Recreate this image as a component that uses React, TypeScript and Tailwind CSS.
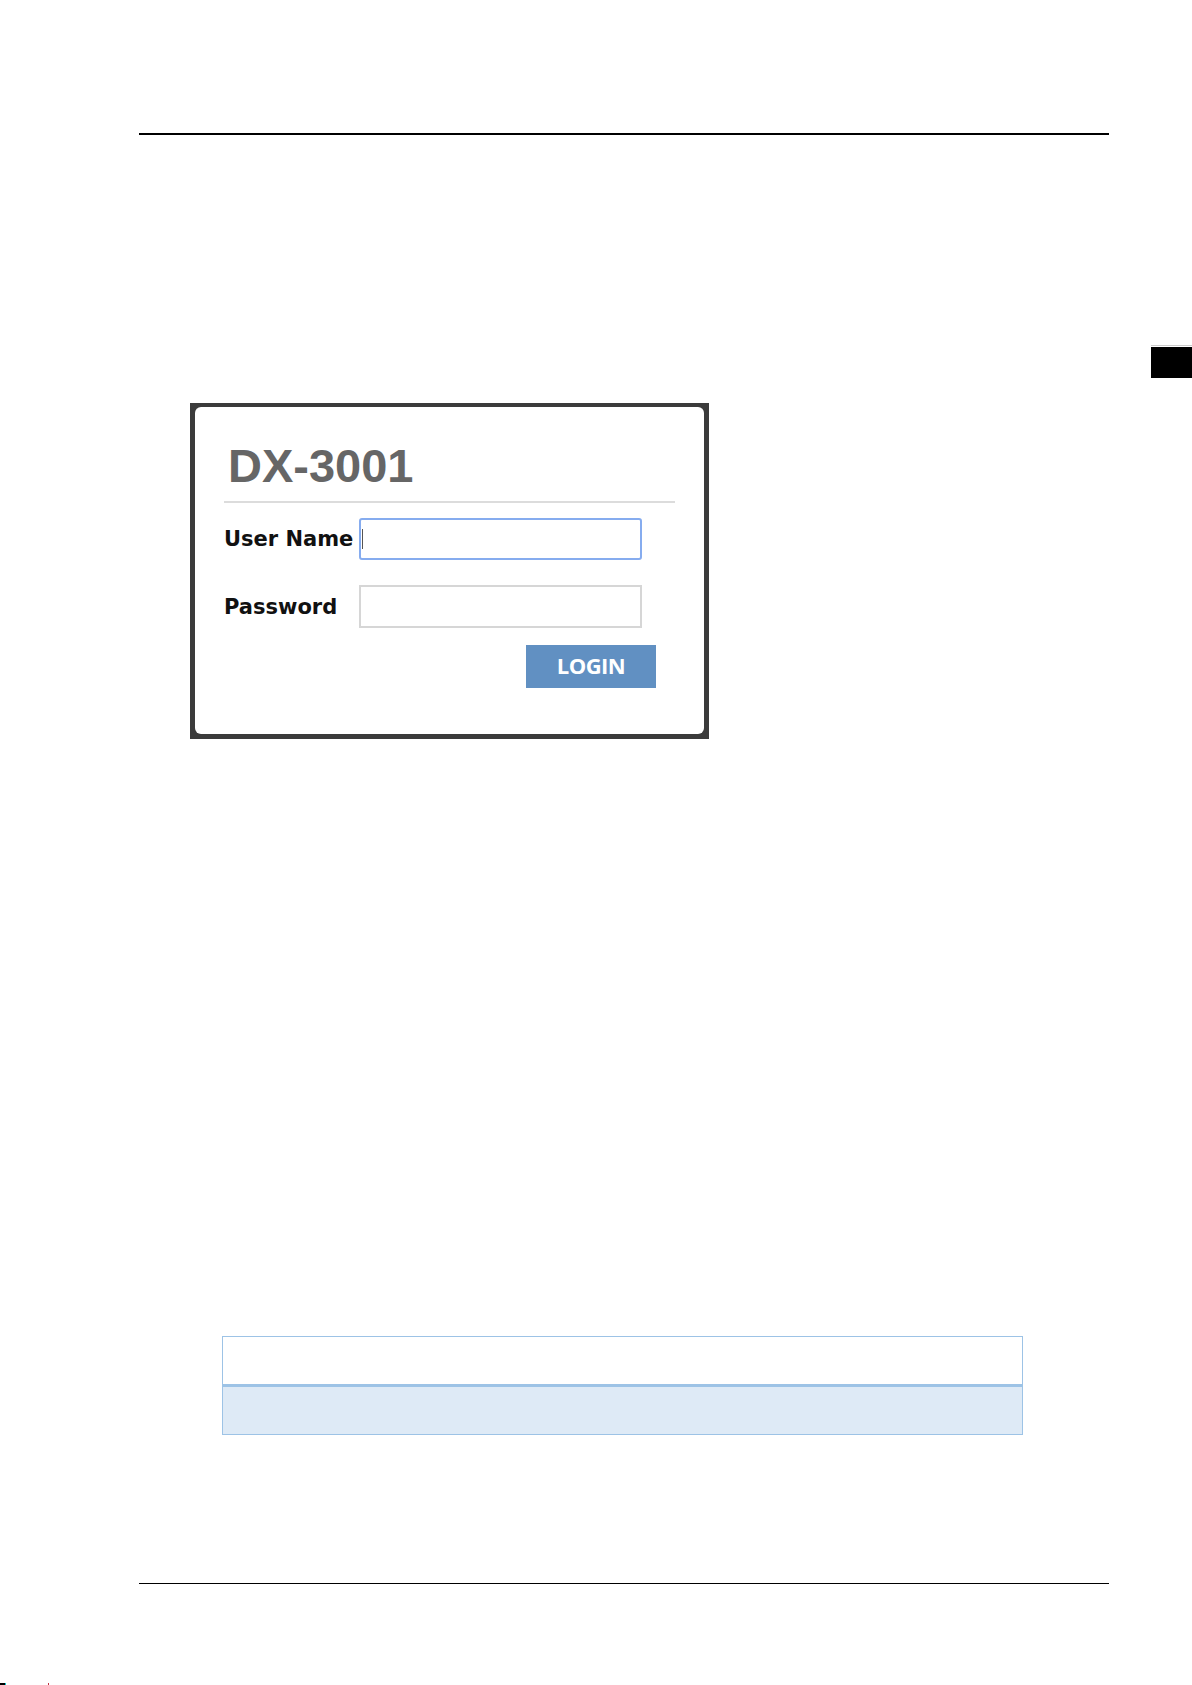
import React from "react";

export default function App() {
  return (
    <div className="w-[1192px] h-[1685px] bg-white flex flex-col overflow-hidden">
      {/* top rule */}
      <div className="mt-[133px] ml-[139px] w-[970px] h-[2px] bg-black" />

      {/* side tab */}
      <div className="mt-[210px] flex flex-col items-end">
        <div className="w-[41px] h-px bg-[#cccccc]" />
        <div className="mt-px w-[41px] h-[31px] bg-black" />
      </div>

      {/* login screenshot */}
      <div className="mt-[25px] ml-[190px] w-[519px] h-[336px] bg-[#3b3b3b] pt-[4px] pl-[5px] pr-[5px] pb-[5px]">
        <div className="w-full h-full bg-white rounded-[6px] flex flex-col px-[29px] pt-[35px]">
          <div
            className="pl-[4px] text-[47px] leading-[47px] font-bold text-[#666666]"
            style={{ fontFamily: '"Liberation Sans", Arial, sans-serif' }}
          >
            DX-3001
          </div>
          <div className="mt-[12px] h-[2px] bg-[#dcdcdc]" />

          <div
            className="mt-[15px] flex items-center"
            style={{ fontFamily: '"DejaVu Sans", Verdana, sans-serif' }}
          >
            <div className="w-[135px] shrink-0 text-[21px] leading-[24px] font-bold text-[#111111]">
              User Name
            </div>
            <div className="w-[283px] h-[42px] border-2 border-[#86acef] rounded-[3px] flex items-center pl-px">
              <div className="w-px h-[20px] bg-[#555555]" />
            </div>
          </div>

          <div
            className="mt-[25px] flex items-center"
            style={{ fontFamily: '"DejaVu Sans", Verdana, sans-serif' }}
          >
            <div className="w-[135px] shrink-0 text-[21px] leading-[24px] font-bold text-[#111111]">
              Password
            </div>
            <div className="w-[283px] h-[43px] border-2 border-[#d6d6d6]" />
          </div>

          <div className="mt-[17px] self-end mr-[19px] w-[130px] h-[43px] bg-[#6190c2] flex items-center justify-center pb-[4px]">
            <span
              className="text-white font-bold text-[22px] leading-none tracking-[-0.5px]"
              style={{ fontFamily: '"Open Sans", "Noto Sans", sans-serif' }}
            >
              LOGIN
            </span>
          </div>
        </div>
      </div>

      {/* table */}
      <div className="mt-[597px] ml-[222px] w-[801px] border border-[#9dc3e6] flex flex-col">
        <div className="h-[47px] bg-white" />
        <div className="h-[3px] bg-[#9dc3e6]" />
        <div className="h-[47px] bg-[#deeaf6]" />
      </div>

      {/* bottom rule */}
      <div className="mt-[148px] ml-[139px] w-[970px] h-px bg-black" />

      {/* tiny marks at page bottom */}
      <div className="mt-[99px] flex h-[2px]">
        <div className="w-[5px] bg-black" />
        <div className="w-px bg-[#00c8d0]" />
        <div className="ml-[42px] w-px bg-[#c03040]" />
      </div>
    </div>
  );
}
